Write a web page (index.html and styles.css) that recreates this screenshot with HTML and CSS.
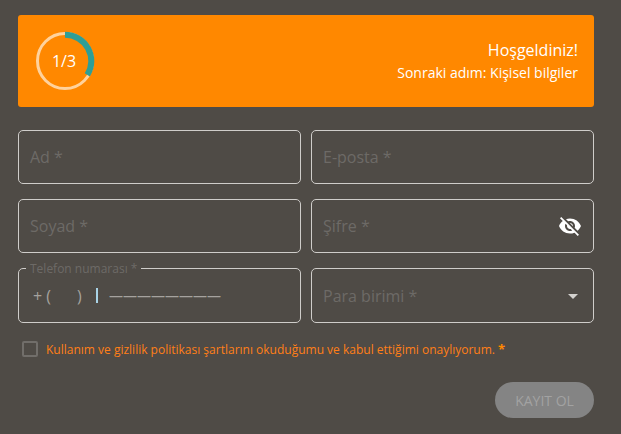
FILE: index.html
```html
<!DOCTYPE html>
<html lang="tr">
<head>
<meta charset="utf-8">
<title>Kayıt</title>
<link rel="stylesheet" href="styles.css">
</head>
<body>
<main class="page">
  <header class="banner">
    <div class="progress">
      <svg class="ring" width="60" height="60" viewBox="0 0 60 60">
        <circle class="ring-track" cx="30" cy="30" r="27.5"/>
        <path class="ring-value" d="M30 3.7A26.3 26.3 0 0 1 52.3 43.94"/>
      </svg>
      <span class="progress-text">1/3</span>
    </div>
    <div class="banner-text">
      <div class="banner-title">Hoşgeldiniz!</div>
      <div class="banner-sub">Sonraki adım: Kişisel bilgiler</div>
    </div>
  </header>
  <form class="grid">
    <div class="field"><span class="placeholder">Ad *</span></div>
    <div class="field"><span class="placeholder">E-posta *</span></div>
    <div class="field"><span class="placeholder">Soyad *</span></div>
    <div class="field field-split">
      <span class="placeholder">Şifre *</span>
      <svg class="eye" width="24" height="24" viewBox="0 0 24 24"><path fill="#fff" d="M12 7c2.76 0 5 2.24 5 5 0 .65-.13 1.26-.36 1.83l2.92 2.92c1.51-1.26 2.7-2.89 3.43-4.75-1.73-4.39-6-7.5-11-7.5-1.4 0-2.74.25-3.98.7l2.16 2.16C10.74 7.13 11.35 7 12 7zM2 4.27l2.28 2.28.46.46C3.08 8.3 1.78 10.02 1 12c1.73 4.39 6 7.5 11 7.5 1.55 0 3.03-.3 4.38-.84l.42.42L19.73 22 21 20.73 3.27 3 2 4.27zM7.53 9.8l1.55 1.55c-.05.21-.08.43-.08.65 0 1.66 1.34 3 3 3 .22 0 .44-.03.65-.08l1.55 1.55c-.67.33-1.41.53-2.2.53-2.76 0-5-2.24-5-5 0-.79.2-1.53.53-2.2zm4.31-.78l3.15 3.15.02-.16c0-1.66-1.34-3-3-3l-.17.01z"/></svg>
    </div>
    <div class="field field-phone">
      <span class="floating">Telefon numarası *</span>
      <span class="phone-code">+ (</span>
      <span class="phone-close">)</span>
      <span class="caret"></span>
      <span class="phone-mask">————————</span>
    </div>
    <div class="field field-split">
      <span class="placeholder">Para birimi *</span>
      <span class="arrow"></span>
    </div>
    <label class="consent">
      <span class="box"></span>
      <span class="consent-text">Kullanım ve gizlilik politikası şartlarını okuduğumu ve kabul ettiğimi onaylıyorum. <b class="star">*</b></span>
    </label>
    <div class="actions"><button class="submit" type="button" disabled>KAYIT OL</button></div>
  </form>
</main>
</body>
</html>
```
FILE: styles.css
```css
* { box-sizing: border-box; }
html, body { margin: 0; height: 100%; }
body {
  background: #4f4b46;
  font-family: "Open Sans", "Liberation Sans", sans-serif;
  overflow: hidden;
}
.page { width: 621px; padding: 15px 27px 0 18px; }
.banner {
  height: 92px;
  background: #ff8800;
  border-radius: 3px;
  display: flex;
  align-items: center;
  justify-content: space-between;
  padding: 0 16px 0 17px;
  color: #fff;
}
.progress { position: relative; width: 60px; height: 60px; margin-top: -1px; }
.ring { display: block; }
.ring-track { fill: none; stroke: #ffd29c; stroke-width: 3; }
.ring-value { fill: none; stroke: #2e9e96; stroke-width: 6; }
.progress-text {
  position: absolute;
  inset: 0;
  display: flex;
  align-items: center;
  justify-content: center;
  padding-right: 2px;
  font-size: 16px;
}
.banner-text { text-align: right; margin-top: -2px; }
.banner-title { font-size: 16px; line-height: 24px; }
.banner-sub { font-size: 14px; line-height: 20px; margin-top: 1px; }
.grid {
  display: grid;
  grid-template-columns: 283px 283px;
  grid-template-rows: 54px 54px 55px auto auto;
  column-gap: 10px;
  row-gap: 15px;
  margin-top: 23px;
}
.field {
  position: relative;
  border: 1px solid #cfcdca;
  border-radius: 5px;
  display: flex;
  align-items: center;
  padding: 0 11px;
}
.field-split { justify-content: space-between; }
.placeholder { color: #6d6a66; font-size: 16px; }
.eye { width: 24px; height: 24px; }
.arrow {
  width: 0; height: 0;
  border-left: 5px solid transparent;
  border-right: 5px solid transparent;
  border-top: 5px solid #d4d2cf;
  margin-right: 4px;
  margin-top: 2px;
}
.field-phone {
  padding: 0 0 0 14px;
  color: #a5a29e;
}
.floating {
  position: absolute;
  left: 7px;
  top: -7px;
  padding: 0 4px;
  background: #4f4b46;
  color: #6d6a66;
  font-size: 12px;
  line-height: 14px;
}
.phone-code { width: 44px; font-size: 16px; }
.phone-close { width: 19px; font-size: 16px; }
.caret { width: 2px; height: 15px; background: #a9d3e6; margin-right: 11px; }
.phone-mask { font-size: 14px; line-height: 1; white-space: nowrap; }
.consent {
  grid-column: 1 / -1;
  display: flex;
  align-items: center;
  gap: 8px;
  height: 16px;
  margin-top: 3px;
  padding-left: 4px;
}
.box {
  width: 16px; height: 16px;
  border: 2px solid #716e6a;
  border-radius: 2px;
  flex: none;
}
.consent-text { color: #ff7f17; font-size: 12px; white-space: nowrap; }
.star { color: #ff8800; font-size: 13px; line-height: 1; }
.actions {
  grid-column: 1 / -1;
  display: flex;
  justify-content: flex-end;
  margin-top: 10px;
}
.submit {
  width: 99px;
  height: 36px;
  border: 0;
  border-radius: 18px;
  background: #848484;
  color: #a2a2a2;
  font-family: inherit;
  font-size: 14px;
  font-weight: 400;
  padding: 0;
}
```
